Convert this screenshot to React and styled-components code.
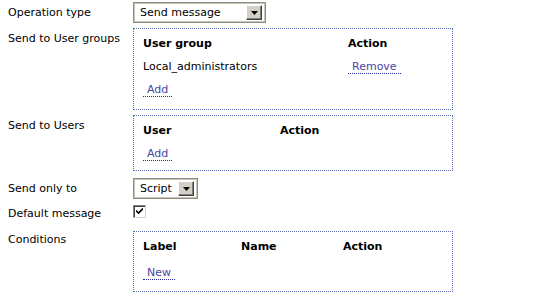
import React from "react";
import styled, { createGlobalStyle } from "styled-components";

const Global = createGlobalStyle`
  html, body { margin: 0; padding: 0; background: #fff; }
  body { font-family: "DejaVu Sans", Verdana, sans-serif; font-size: 11px; color: #000; }
`;

const Form = styled.div`
  display: flex;
  flex-direction: column;
  padding-left: 8px;
  width: 545px;
`;

const Row = styled.div`
  display: flex;
  align-items: ${(p) => (p.$center ? "center" : "flex-start")};
  margin-top: ${(p) => p.$mt}px;
`;

const Label = styled.div`
  width: 125px;
  flex: none;
  line-height: 13px;
  padding-top: ${(p) => p.$pt || 0}px;
`;

const SelectBox = styled.div`
  box-sizing: border-box;
  width: ${(p) => p.$w}px;
  height: 21px;
  display: flex;
  align-items: center;
  justify-content: space-between;
  border: 1px solid #8f8c80;
  box-shadow: inset 0 0 0 1px #c8c5b9;
  padding: 0 3px 0 6px;
  background: #fff;
`;

const SelectText = styled.span`
  line-height: 13px;
`;

const ArrowButton = styled.span`
  box-sizing: border-box;
  width: 16px;
  height: 15px;
  background: #d4d0c8;
  border-top: 1px solid #fff;
  border-left: 1px solid #fff;
  border-right: 1px solid #404040;
  border-bottom: 1px solid #404040;
  box-shadow: inset -1px -1px 0 #808080;
  display: flex;
  align-items: center;
  justify-content: center;
`;

const Box = styled.div`
  box-sizing: border-box;
  width: 320px;
  height: ${(p) => p.$h}px;
  border: 1px dotted #5b6db3;
  padding: 3px 9px 0 9px;
`;

const TRow = styled.div`
  display: flex;
  align-items: center;
  height: 23px;
  margin-top: ${(p) => p.$mt || 0}px;
`;

const Cell = styled.div`
  width: ${(p) => (p.$w ? `${p.$w}px` : "auto")};
  flex: ${(p) => (p.$w ? "none" : "1")};
  font-weight: ${(p) => (p.$head ? "bold" : "normal")};
  line-height: 13px;
  white-space: nowrap;
`;

const Link = styled.a`
  display: inline-block;
  padding: 0 4px;
  line-height: 13px;
  color: #4a43a3;
  text-decoration: none;
  border-bottom: 1px dotted #2b2899;
  cursor: pointer;
`;

const Check = styled.span`
  box-sizing: border-box;
  width: 13px;
  height: 13px;
  display: inline-flex;
  align-items: center;
  justify-content: center;
  background: #fff;
  border-top: 1px solid #808080;
  border-left: 1px solid #808080;
  border-right: 1px solid #d4d0c8;
  border-bottom: 1px solid #d4d0c8;
  box-shadow: inset 1px 1px 0 #404040;
`;

const Arrow = () => (
  <svg width="7" height="4" viewBox="0 0 7 4">
    <path d="M0 0h7L3.5 4z" fill="#000" />
  </svg>
);

const Select = ({ w, value }) => (
  <SelectBox $w={w}>
    <SelectText>{value}</SelectText>
    <ArrowButton>
      <Arrow />
    </ArrowButton>
  </SelectBox>
);

export default function App() {
  return (
    <>
      <Global />
      <Form>
        <Row $center $mt={2}>
          <Label>Operation type</Label>
          <Select w={133} value="Send message" />
        </Row>

        <Row $mt={5}>
          <Label $pt={4}>Send to User groups</Label>
          <Box $h={82}>
            <TRow>
              <Cell $head $w={205}>User group</Cell>
              <Cell $head>Action</Cell>
            </TRow>
            <TRow>
              <Cell $w={205}>Local_administrators</Cell>
              <Cell>
                <Link>Remove</Link>
              </Cell>
            </TRow>
            <TRow>
              <Cell>
                <Link>Add</Link>
              </Cell>
            </TRow>
          </Box>
        </Row>

        <Row $mt={5}>
          <Label $pt={4}>Send to Users</Label>
          <Box $h={56}>
            <TRow>
              <Cell $head $w={137}>User</Cell>
              <Cell $head>Action</Cell>
            </TRow>
            <TRow>
              <Cell>
                <Link>Add</Link>
              </Cell>
            </TRow>
          </Box>
        </Row>

        <Row $center $mt={7}>
          <Label>Send only to</Label>
          <Select w={65} value="Script" />
        </Row>

        <Row $mt={6}>
          <Label $pt={2}>Default message</Label>
          <Check>
            <svg width="7" height="7" viewBox="0 0 7 7">
              <path d="M0 2.5l2.5 2.5L7 0.5" stroke="#000" strokeWidth="1.6" fill="none" />
            </svg>
          </Check>
        </Row>

        <Row $mt={11}>
          <Label $pt={2}>Conditions</Label>
          <Box $h={61}>
            <TRow>
              <Cell $head $w={98}>Label</Cell>
              <Cell $head $w={102}>Name</Cell>
              <Cell $head>Action</Cell>
            </TRow>
            <TRow $mt={3}>
              <Cell>
                <Link>New</Link>
              </Cell>
            </TRow>
          </Box>
        </Row>
      </Form>
    </>
  );
}
